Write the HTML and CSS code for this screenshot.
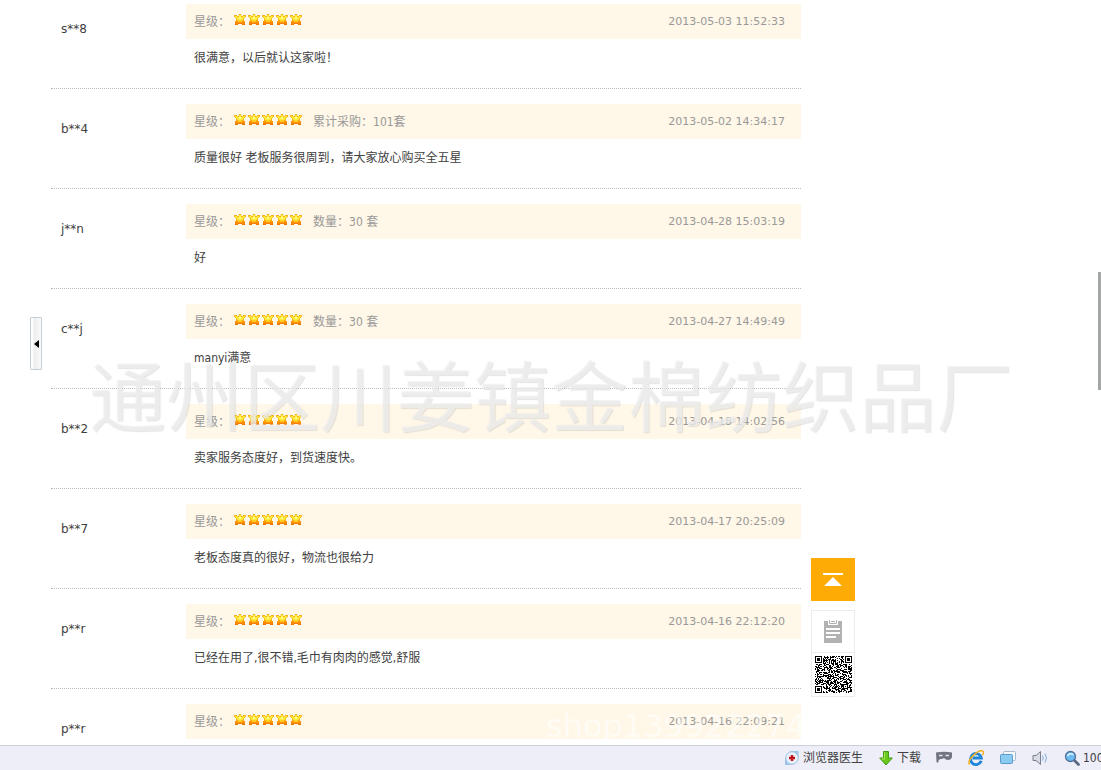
FILE: index.html
```html
<!DOCTYPE html>
<html lang="zh-CN">
<head>
<meta charset="utf-8">
<title>买家评价</title>
<link rel="stylesheet" href="styles.css">
</head>
<body>
<svg class="defs" aria-hidden="true">
  <defs>
    <linearGradient id="gold" x1="0" y1="0" x2="0" y2="1">
      <stop offset="0" stop-color="#f0a818"/>
      <stop offset=".4" stop-color="#fdc21c"/>
      <stop offset=".7" stop-color="#ff9d0c"/>
      <stop offset="1" stop-color="#f06c00"/>
    </linearGradient>
    <g id="star">
      <path d="M0 1H3V2H4.500L5 0H7L7.500 2H9V1H12V3H11V4H10V7H11V11H8V10H4V11H1V7H2V4H1V3H0z" fill="url(#gold)"/>
      <path d="M1 2H3V3H5V1H7V3H9V2H11V3H10V4H9V6H3V4H2V3H1z" fill="#ffec3c"/>
      <path d="M5 3H7V5H5z" fill="#fffa8c"/>
      <path d="M4 6h4v2H4z" fill="#ffcf24"/>
    </g>
    <symbol id="stars" viewBox="0 0 68 11">
      <use href="#star"/><use href="#star" x="14"/><use href="#star" x="28"/><use href="#star" x="42"/><use href="#star" x="56"/>
    </symbol>
  </defs>
</svg>
<main class="page">
  <button class="handle" type="button" aria-label="展开侧栏"><svg width="5" height="8" viewBox="0 0 5 8"><path d="M5 0v8L0 4z"/></svg></button>
  <ul class="reviews">
    <li class="review"><span class="user">s**8</span><div class="detail"><div class="meta"><span>星级：</span><svg class="stars" role="img" aria-label="五星"><use href="#stars"/></svg><time>2013-05-03 11:52:33</time></div><p class="comment">很满意，以后就认这家啦！</p></div></li>
    <li class="review"><span class="user">b**4</span><div class="detail"><div class="meta"><span>星级：</span><svg class="stars" role="img" aria-label="五星"><use href="#stars"/></svg><span>累计采购：101套</span><time>2013-05-02 14:34:17</time></div><p class="comment">质量很好 老板服务很周到，请大家放心购买全五星</p></div></li>
    <li class="review"><span class="user">j**n</span><div class="detail"><div class="meta"><span>星级：</span><svg class="stars" role="img" aria-label="五星"><use href="#stars"/></svg><span>数量：30 套</span><time>2013-04-28 15:03:19</time></div><p class="comment">好</p></div></li>
    <li class="review"><span class="user">c**j</span><div class="detail"><div class="meta"><span>星级：</span><svg class="stars" role="img" aria-label="五星"><use href="#stars"/></svg><span>数量：30 套</span><time>2013-04-27 14:49:49</time></div><p class="comment">manyi满意</p></div></li>
    <li class="review"><span class="user">b**2</span><div class="detail"><div class="meta"><span>星级：</span><svg class="stars" role="img" aria-label="五星"><use href="#stars"/></svg><time>2013-04-18 14:02:56</time></div><p class="comment">卖家服务态度好，到货速度快。</p></div></li>
    <li class="review"><span class="user">b**7</span><div class="detail"><div class="meta"><span>星级：</span><svg class="stars" role="img" aria-label="五星"><use href="#stars"/></svg><time>2013-04-17 20:25:09</time></div><p class="comment">老板态度真的很好，物流也很给力</p></div></li>
    <li class="review"><span class="user">p**r</span><div class="detail"><div class="meta"><span>星级：</span><svg class="stars" role="img" aria-label="五星"><use href="#stars"/></svg><time>2013-04-16 22:12:20</time></div><p class="comment">已经在用了,很不错,毛巾有肉肉的感觉,舒服</p></div></li>
    <li class="review"><span class="user">p**r</span><div class="detail"><div class="meta"><span>星级：</span><svg class="stars" role="img" aria-label="五星"><use href="#stars"/></svg><time>2013-04-16 22:09:21</time></div></div></li>
  </ul>
  <aside class="tools">
    <button class="to-top" type="button" aria-label="返回顶部"><svg width="20" height="14" viewBox="0 0 20 14"><path d="M0 0h20v2H0zM10 4l9 9H1z" fill="#fff"/></svg></button>
    <div class="card">
      <button class="feedback" type="button" aria-label="意见反馈"><svg width="18" height="23" viewBox="0 0 18 23"><path d="M0 1h4v4h10V1h4v22H0z" fill="#b2b2b2"/><path d="M5.500 0v3.500h7V0" fill="none" stroke="#b2b2b2"/><path d="M7 1.500h4" stroke="#b2b2b2"/><path d="M2 9h14M2 13h14M2 17h10" stroke="#fff" stroke-width="2"/></svg></button>
      <svg id="qr" class="qr" viewBox="0 0 37 37" role="img" aria-label="二维码" shape-rendering="crispEdges"><path/></svg>
    </div>
  </aside>
  <div class="shop-mark">通州区川姜镇金棉纺织品厂</div>
  <div class="id-mark">shop139922274</div>
  <div class="thumb"></div>
</main>
<footer class="status">
  <button type="button"><svg width="16" height="16" viewBox="0 0 16 16"><path d="M6 1h8.500v7z" fill="#9cc4ec"/><path d="M1 8v7h8z" fill="#9cc4ec"/><circle cx="8" cy="8" r="6.300" fill="#e6f1fb" stroke="#a5bfdc"/><path d="M6.800 5h2.400v1.800H11v2.400H9.200V11H6.800V9.200H5V6.800h1.800z" fill="#c5131b"/></svg>浏览器医生</button>
  <button type="button"><svg width="16" height="16" viewBox="0 0 16 16"><path d="M5.500 1.500h5V8h3.800L8 15 1.700 8h3.800z" fill="#69c81e" stroke="#3f9c14"/><path d="M6.500 2.500v6.500H4" fill="none" stroke="#a9ea58"/></svg>下载</button>
  <div class="icons">
    <button type="button" aria-label="隐私浏览"><svg width="16" height="16" viewBox="0 0 16 16"><path d="M0 2.500Q8 1 16 2.500V7q-1 3-4 3-2.500 0-4-2-1 1-3 1-2.500 0-3 4L.5 12z" fill="#72747f"/><path d="M3 5.500h3.500M9.500 5.500H13" stroke="#e3e4ee" stroke-width="1.600"/></svg></button>
    <button type="button" aria-label="浏览器模式"><svg width="16" height="16" viewBox="0 0 16 16"><path d="M13.200 10.800A5.500 5.500 0 1 1 13.400 8H4.500" fill="none" stroke="#1e86dc" stroke-width="2.800"/><path d="M1.500 14.500C-1.500 10 11-1.500 14.800 1.200c1.100.8.500 2.700-.4 4" fill="none" stroke="#f4b321" stroke-width="1.500"/></svg></button>
    <button type="button" aria-label="窗口"><svg width="16" height="16" viewBox="0 0 16 16"><rect x="3.500" y="1.500" width="12" height="9" rx="1" fill="#f2f7fb" stroke="#a7bac9"/><rect x=".5" y="4.500" width="12" height="9" rx="1" fill="#8acbf1" stroke="#5a9bc9"/></svg></button>
    <button type="button" aria-label="声音"><svg width="16" height="16" viewBox="0 0 16 16"><path d="M1 5.500h3l4.500-4v13L4 10.500H1z" fill="#d9dce2" stroke="#787e89"/><path d="M10.500 5.500q1.500 2.500 0 5M13 3.500q3 4.500 0 9" fill="none" stroke="#7eaee0"/></svg></button>
    <button class="zoom" type="button"><svg width="16" height="16" viewBox="0 0 16 16"><path d="m10.500 10.500 4 4" stroke="#56647c" stroke-width="2.600" stroke-linecap="round"/><circle cx="6.500" cy="6.500" r="5" fill="#6cbcf4" stroke="#51719b" stroke-width="1.300"/><path d="M3.500 6Q6 2 9.500 5" fill="none" stroke="#e3f4ff" stroke-width="1.600"/></svg><span>100</span></button>
  </div>
</footer>
<script src="qr.js"></script>
</body>
</html>
```
FILE: styles.css
```css
* { box-sizing: border-box; }

body {
  margin: 0;
  height: 100vh;
  display: flex;
  flex-direction: column;
  overflow: hidden;
  background: #fff;
  color: #404040;
  font: 12px/18px "DejaVu Sans Condensed", "Noto Sans CJK SC", sans-serif;
}

button {
  display: flex;
  align-items: center;
  justify-content: center;
  padding: 0;
  border: 0;
  background: none;
  color: inherit;
  font: inherit;
}

.defs { position: absolute; width: 0; height: 0; }

.page {
  position: relative;
  flex: 1;
  min-height: 0;
  display: flex;
  padding-left: 30px;
  overflow: hidden;
}

.handle {
  align-self: center;
  width: 12px;
  height: 53px;
  margin: 0 9px 58px 0;
  border: 1px solid #c3ced6;
  border-radius: 1px;
  background: linear-gradient(90deg, #fff 15%, #ededed 30%, #fafafa);
}

.reviews {
  flex: 0 1 750px;
  margin: 0;
  padding: 0;
  list-style: none;
}

.review {
  display: flex;
  min-height: 100px;
  padding-top: 15px;
  border-bottom: 1px dotted #bbb;
}

.review:first-child { min-height: 89px; padding-top: 4px; }

.user {
  width: 135px;
  padding: 16px 10px 0;
  font-family: "DejaVu Sans", sans-serif;
}

.detail { flex: 1; }

.meta {
  display: flex;
  align-items: center;
  height: 35px;
  padding: 1px 16px 0 8px;
  background: #fff7e7;
  color: #999;
}

.stars {
  width: 68px;
  height: 11px;
  margin: 0 11px 5px 4px;
}

time {
  margin-left: auto;
  font-family: "DejaVu Sans", sans-serif;
  font-size: 11px;
}

.comment { margin: 0; padding: 10px 8px; }

.tools {
  align-self: flex-end;
  width: 44px;
  margin: 0 0 48px 10px;
}

.to-top {
  width: 100%;
  height: 43px;
  margin-bottom: 9px;
  background: #ffab05;
}

.card { border: 1px solid #ececec; background: #fff; }

.feedback {
  width: 100%;
  height: 42px;
  border-bottom: 1px solid #ececec;
}

.qr {
  display: block;
  width: 37px;
  height: 37px;
  margin: 3px;
}

.shop-mark {
  position: absolute;
  left: 89px;
  top: 337px;
  color: rgba(240, 240, 240, 0.7);
  font: 77px/112px "Noto Sans CJK SC", sans-serif;
  white-space: nowrap;
  text-shadow: 1px 1px 1px rgba(180, 180, 180, 0.35);
  pointer-events: none;
}

.id-mark {
  position: absolute;
  left: 546px;
  top: 706px;
  color: rgba(255, 255, 255, 0.6);
  font: 32px/40px "DejaVu Sans", sans-serif;
  pointer-events: none;
}

.thumb {
  position: absolute;
  right: 0;
  top: 272px;
  width: 3px;
  height: 118px;
  background: #a5a7a6;
}

.status {
  display: flex;
  align-items: center;
  justify-content: flex-end;
  gap: 15px;
  height: 25px;
  border-top: 1px solid #cdd0da;
  background: #edeef7;
}

.status button { gap: 3px; }

.icons { display: flex; gap: 16px; }

.zoom span { width: 18px; overflow: hidden; }
```
FILE: qr.js
```js
const size = 37;
const finder = [1, 1, 0, 1, 0];
const alignment = [1, 0, 1];
const corners = [[3, 3], [size - 4, 3], [3, size - 4]];
let seed = 20130;

function noise() {
  seed = (seed * 48271) % 2147483647;
  return seed / 2147483647 > 0.48;
}

function ring(x, y, cx, cy, rings) {
  return rings[Math.max(Math.abs(x - cx), Math.abs(y - cy))];
}

function isDark(x, y) {
  for (const [cx, cy] of corners) {
    const hit = ring(x, y, cx, cy, finder);
    if (hit !== undefined) return hit;
  }
  const hit = ring(x, y, size - 7, size - 7, alignment);
  if (hit !== undefined) return hit;
  if (x === 6) return y % 2 === 0;
  if (y === 6) return x % 2 === 0;
  return noise();
}

let path = "";
for (let y = 0; y < size; y++) {
  for (let x = 0; x < size; x++) {
    if (isDark(x, y)) path += `M${x} ${y}h1v1h-1z`;
  }
}
document.querySelector("#qr path").setAttribute("d", path);
```
